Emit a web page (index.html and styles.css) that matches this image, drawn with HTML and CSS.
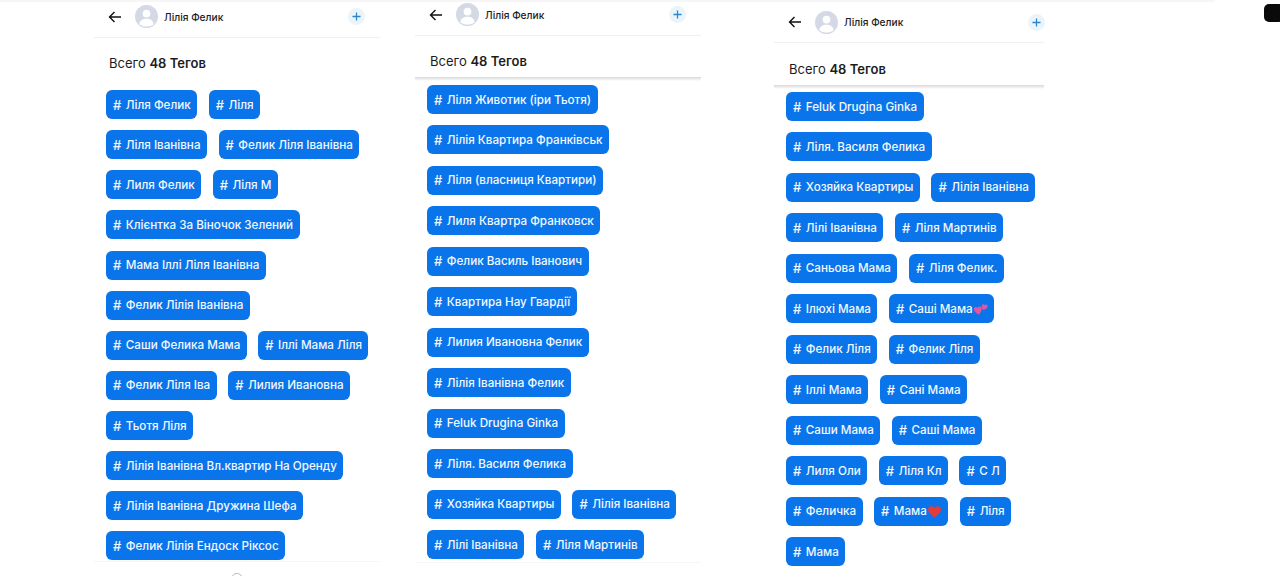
FILE: index.html
```html
<!DOCTYPE html>
<html lang="en">
<head>
    <meta charset="UTF-8">
    <meta name="viewport" content="width=device-width, initial-scale=1.0">
    <title>Теги</title>
    <link rel="stylesheet" href="styles.css">
</head>
<body>
    <div class="top-strip"></div>
    <div class="notch"></div>
    <div class="screens">
        <section class="screen screen-one">
            <header class="bar">
                <svg class="back" viewBox="0 0 14 12"><path d="M13 6H1.500M6.500 1 1.500 6l5 5"/></svg>
                <span class="avatar"><svg viewBox="0 0 24 24"><circle cx="12" cy="9" r="4"/><path d="M4.500 20c.6-4 3.500-5.600 7.500-5.600s6.900 1.600 7.500 5.600c-2 1.500-4.500 2.400-7.500 2.400s-5.500-.9-7.500-2.400z"/></svg></span>
                <span class="name">Лілія Фелик</span>
                <span class="add"><svg viewBox="0 0 10 10"><path d="M5 .5v9M.5 5h9"/></svg></span>
            </header>
            <h2 class="total">Всего <b>48 Тегов</b></h2>
            <div class="tags">
                <div class="row"><a class="tag"><i>#</i>Ліля Фелик</a><a class="tag"><i>#</i>Ліля</a></div>
                <div class="row"><a class="tag"><i>#</i>Ліля Іванівна</a><a class="tag"><i>#</i>Фелик Ліля Іванівна</a></div>
                <div class="row"><a class="tag"><i>#</i>Лиля Фелик</a><a class="tag"><i>#</i>Ліля М</a></div>
                <div class="row"><a class="tag"><i>#</i>Клієнтка За Віночок Зелений</a></div>
                <div class="row"><a class="tag"><i>#</i>Мама Іллі Ліля Іванівна</a></div>
                <div class="row"><a class="tag"><i>#</i>Фелик Лілія Іванівна</a></div>
                <div class="row"><a class="tag"><i>#</i>Саши Фелика Мама</a><a class="tag"><i>#</i>Іллі Мама Ліля</a></div>
                <div class="row"><a class="tag"><i>#</i>Фелик Ліля Іва</a><a class="tag"><i>#</i>Лилия Ивановна</a></div>
                <div class="row"><a class="tag"><i>#</i>Тьотя Ліля</a></div>
                <div class="row"><a class="tag"><i>#</i>Лілія Іванівна Вл.квартир На Оренду</a></div>
                <div class="row"><a class="tag"><i>#</i>Лілія Іванівна Дружина Шефа</a></div>
                <div class="row"><a class="tag"><i>#</i>Фелик Лілія Ендоск Ріксос</a></div>
            </div>
            <div class="foot"><span class="nav-ring"></span></div>
        </section>

        <section class="screen screen-two">
            <header class="bar">
                <svg class="back" viewBox="0 0 14 12"><path d="M13 6H1.500M6.500 1 1.500 6l5 5"/></svg>
                <span class="avatar"><svg viewBox="0 0 24 24"><circle cx="12" cy="9" r="4"/><path d="M4.500 20c.6-4 3.500-5.600 7.500-5.600s6.900 1.600 7.500 5.600c-2 1.500-4.500 2.400-7.500 2.400s-5.500-.9-7.500-2.400z"/></svg></span>
                <span class="name">Лілія Фелик</span>
                <span class="add"><svg viewBox="0 0 10 10"><path d="M5 .5v9M.5 5h9"/></svg></span>
            </header>
            <h2 class="total scrolled">Всего <b>48 Тегов</b></h2>
            <div class="tags">
                <div class="row"><a class="tag"><i>#</i>Ліля Животик (іри Тьотя)</a></div>
                <div class="row"><a class="tag"><i>#</i>Лілія Квартира Франківськ</a></div>
                <div class="row"><a class="tag"><i>#</i>Ліля (власниця Квартири)</a></div>
                <div class="row"><a class="tag"><i>#</i>Лиля Квартра Франковск</a></div>
                <div class="row"><a class="tag"><i>#</i>Фелик Василь Іванович</a></div>
                <div class="row"><a class="tag"><i>#</i>Квартира Нау Гвардії</a></div>
                <div class="row"><a class="tag"><i>#</i>Лилия Ивановна Фелик</a></div>
                <div class="row"><a class="tag"><i>#</i>Лілія Іванівна Фелик</a></div>
                <div class="row"><a class="tag"><i>#</i>Feluk Drugina Ginka</a></div>
                <div class="row"><a class="tag"><i>#</i>Ліля. Василя Фелика</a></div>
                <div class="row"><a class="tag"><i>#</i>Хозяйка Квартиры</a><a class="tag"><i>#</i>Лілія Іванівна</a></div>
                <div class="row"><a class="tag"><i>#</i>Лілі Іванівна</a><a class="tag"><i>#</i>Ліля Мартинів</a></div>
            </div>
            <div class="foot"></div>
        </section>

        <section class="screen screen-three">
            <header class="bar">
                <svg class="back" viewBox="0 0 14 12"><path d="M13 6H1.500M6.500 1 1.500 6l5 5"/></svg>
                <span class="avatar"><svg viewBox="0 0 24 24"><circle cx="12" cy="9" r="4"/><path d="M4.500 20c.6-4 3.500-5.600 7.500-5.600s6.900 1.600 7.500 5.600c-2 1.500-4.500 2.400-7.500 2.400s-5.500-.9-7.500-2.400z"/></svg></span>
                <span class="name">Лілія Фелик</span>
                <span class="add"><svg viewBox="0 0 10 10"><path d="M5 .5v9M.5 5h9"/></svg></span>
            </header>
            <h2 class="total scrolled">Всего <b>48 Тегов</b></h2>
            <div class="tags">
                <div class="row"><a class="tag"><i>#</i>Feluk Drugina Ginka</a></div>
                <div class="row"><a class="tag"><i>#</i>Ліля. Василя Фелика</a></div>
                <div class="row"><a class="tag"><i>#</i>Хозяйка Квартиры</a><a class="tag"><i>#</i>Лілія Іванівна</a></div>
                <div class="row"><a class="tag"><i>#</i>Лілі Іванівна</a><a class="tag"><i>#</i>Ліля Мартинів</a></div>
                <div class="row"><a class="tag"><i>#</i>Саньова Мама</a><a class="tag"><i>#</i>Ліля Фелик.</a></div>
                <div class="row"><a class="tag"><i>#</i>Ілюхі Мама</a><a class="tag"><i>#</i>Саші Мама<svg class="hearts" viewBox="0 0 16 14"><path d="M6 13C3 11 1 9 1 6.800 1 4.500 4 4 5 6c.6-2.200 4-2.200 4.200.4C9.400 9 8 11.500 6 13z"/><path d="M11 8c-1-1-2-2.500-1.600-4.500C9.800 1.500 12 1.500 12.500 3c1-1.500 3.200-.8 3 1.200C15.300 6 13.500 7.500 11 8z"/></svg></a></div>
                <div class="row"><a class="tag"><i>#</i>Фелик Ліля</a><a class="tag"><i>#</i>Фелик Ліля</a></div>
                <div class="row"><a class="tag"><i>#</i>Іллі Мама</a><a class="tag"><i>#</i>Сані Мама</a></div>
                <div class="row"><a class="tag"><i>#</i>Саши Мама</a><a class="tag"><i>#</i>Саші Мама</a></div>
                <div class="row"><a class="tag"><i>#</i>Лиля Оли</a><a class="tag"><i>#</i>Ліля Кл</a><a class="tag"><i>#</i>С Л</a></div>
                <div class="row"><a class="tag"><i>#</i>Феличка</a><a class="tag"><i>#</i>Мама<svg class="heart" viewBox="0 0 14 13"><path d="M7 12.500C3 9.500.5 7.500.5 4.500.5 1 5 0 7 3c2-3 6.500-2 6.500 1.500 0 3-2.500 5-6.500 8z"/></svg></a><a class="tag"><i>#</i>Ліля</a></div>
                <div class="row"><a class="tag"><i>#</i>Мама</a></div>
            </div>
        </section>
    </div>
</body>
</html>
```

FILE: styles.css
```css
* {
    box-sizing: border-box;
}
body {
    font-family: Inter, "Noto Sans", sans-serif;
    background-color: #fff;
    color: #1c1c1e;
    margin: 0;
    height: 576px;
    overflow: hidden;
}
.top-strip {
    position: absolute;
    left: 0;
    top: 0;
    width: 1215px;
    height: 2px;
    background: #f6f6f6;
}
.notch {
    position: absolute;
    left: 1264px;
    top: 4px;
    width: 20px;
    height: 18px;
    background: #0a0a0a;
    border-radius: 5px;
}
.screens {
    display: flex;
    align-items: flex-start;
    padding-left: 94px;
}
.screen {
    width: 286px;
    flex: none;
}
.screen-one {
    margin-right: 35px;
}
.screen-two {
    margin-top: -2px;
    margin-right: 73px;
}
.screen-three {
    margin-top: 6px;
    width: 270px;
}
.bar {
    display: flex;
    align-items: center;
    height: 38px;
    padding: 0 15.500px 4px 14px;
    border-bottom: 1px solid #eef0f3;
}
.screen-three .bar {
    height: 37px;
    padding-right: 0;
}
.screen-three .add {
    margin-right: -1px;
}
.back {
    width: 14px;
    height: 12px;
    fill: none;
    stroke: #111;
    stroke-width: 1.4;
}
.avatar {
    width: 23px;
    height: 23px;
    margin-left: 13px;
    border-radius: 50%;
    background: #d5d9e6;
    overflow: hidden;
}
.avatar svg {
    display: block;
    width: 23px;
    height: 23px;
    fill: #fff;
}
.name {
    flex: 1;
    margin-left: 6px;
    font-size: 10.200px;
    font-weight: 500;
}
.add {
    display: flex;
    align-items: center;
    justify-content: center;
    width: 17px;
    height: 17px;
    border-radius: 50%;
    background: #eaf4fb;
}
.add svg {
    width: 9px;
    height: 9px;
    fill: none;
    stroke: #2a86c8;
    stroke-width: 1.4;
}
.total {
    margin: 0;
    height: 52px;
    padding: 17px 0 0 15px;
    font-size: 13px;
    line-height: 17px;
    font-weight: 400;
}
.total b {
    font-weight: 600;
}
/* lists that have been scrolled keep a soft edge under the title */
.total.scrolled {
    height: 45px;
    margin-bottom: 4px;
    background: linear-gradient(to bottom, transparent 41px, #d8d8d8 41px, #fff 45px);
}
.screen-three .total.scrolled {
    height: 46px;
    padding-top: 18px;
    margin-bottom: 3px;
    background: linear-gradient(to bottom, transparent 42px, #d8d8d8 42px, #fff 46px);
}
.tags {
    display: flex;
    flex-direction: column;
    gap: 11.140px;
    padding-left: 12px;
}
.screen-two .tags,
.screen-three .tags {
    gap: 11.480px;
}
.row {
    display: flex;
    gap: 11.500px;
}
.tag {
    display: flex;
    align-items: center;
    height: 29px;
    padding: 0 6.500px 0 7px;
    border-radius: 6px;
    background: #0a75ea;
    color: #f2f8ff;
    font-size: 11.650px;
    font-weight: 500;
    white-space: nowrap;
}
.tag i {
    font-style: normal;
    margin-right: 4.500px;
    font-size: 13px;
}
.hearts {
    width: 15px;
    height: 14px;
    fill: #e2569f;
}
.heart {
    width: 15px;
    height: 13px;
    fill: #e53b3b;
}
.foot {
    display: flex;
    justify-content: center;
    height: 20px;
    margin-top: 1px;
    border-top: 1px solid #f6f6f6;
}
.screen-two .foot {
    margin-top: 3px;
}
.nav-ring {
    width: 12px;
    height: 12px;
    margin-top: 11px;
    border: 1px solid #bbb;
    border-radius: 50%;
}
```
